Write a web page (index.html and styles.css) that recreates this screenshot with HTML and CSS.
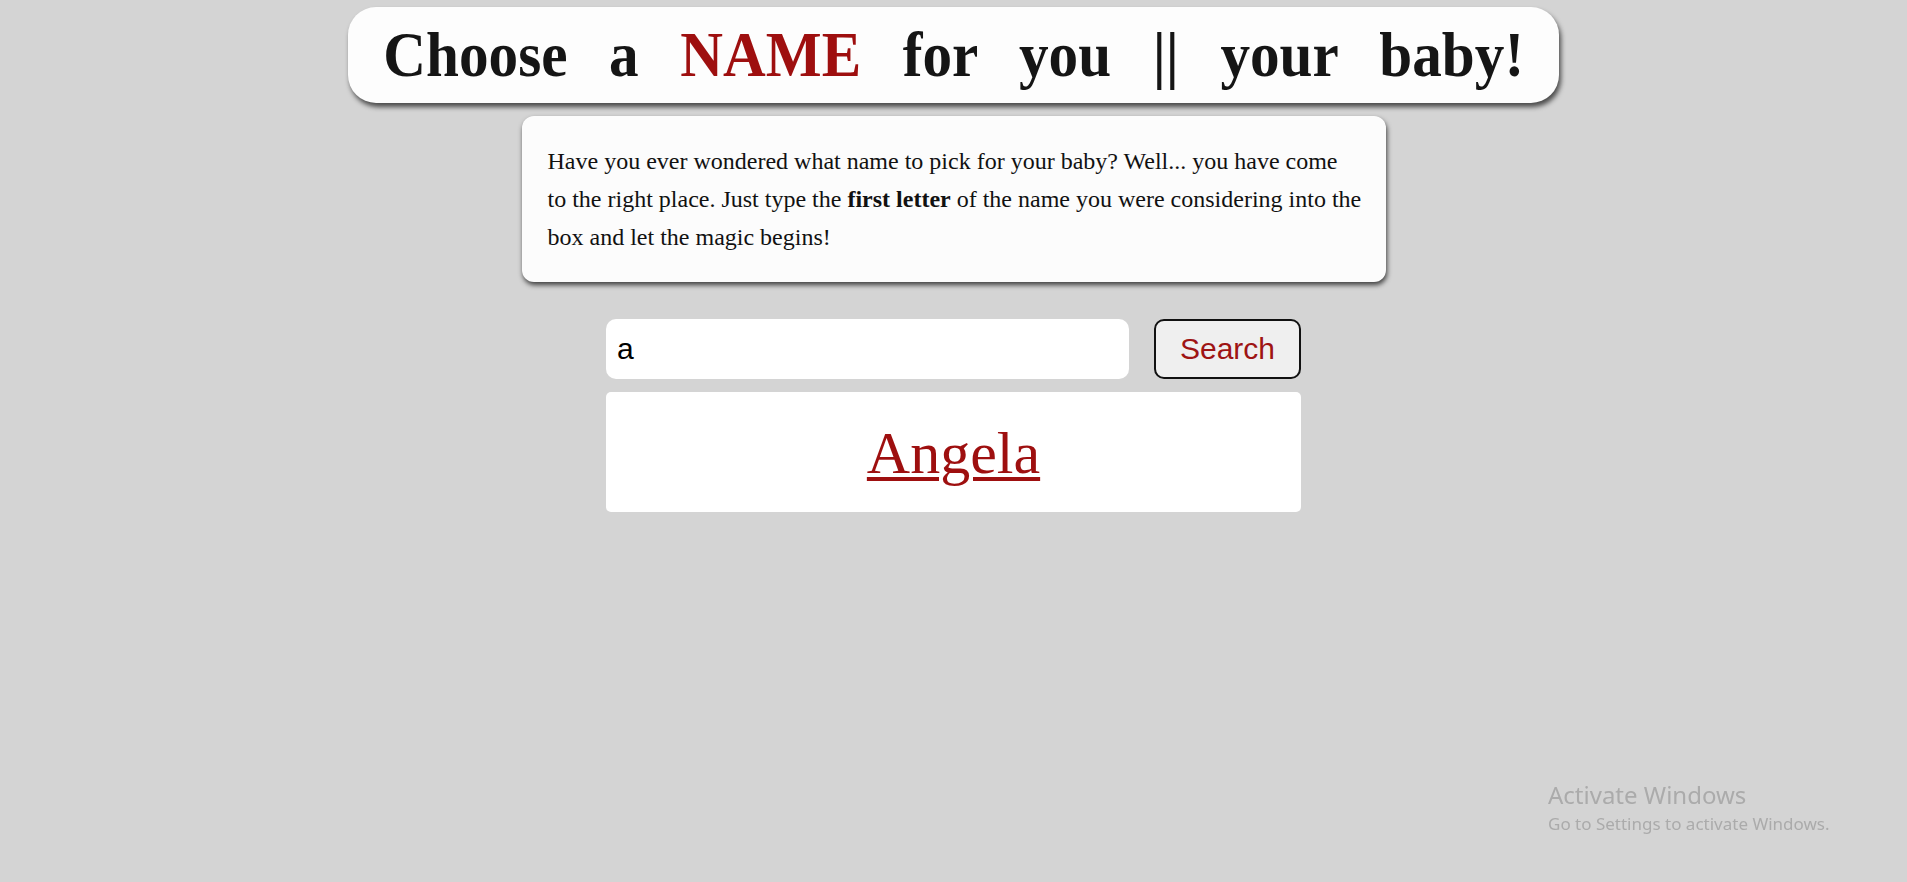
FILE: index.html
```html
<!DOCTYPE html>
<html lang="en">
<head>
<meta charset="utf-8">
<title>Choose a NAME</title>
<link rel="stylesheet" href="styles.css">
</head>
<body>
<main class="page">
  <h1 class="title"><span class="title-text">Choose a <span class="accent">NAME</span> for you || your baby!</span></h1>
  <div class="intro">
    <p>Have you ever wondered what name to pick for your baby? Well... you have come to the right place. Just type the <b>first letter</b> of the name you were considering into the box and let the magic begins!</p>
  </div>
  <form class="search-row">
    <input class="search-input" type="text" value="a">
    <button class="search-btn" type="button">Search</button>
  </form>
  <div class="result">
    <a class="result-name" href="#">Angela</a>
  </div>
</main>
<div class="watermark">
  <div class="wm-title">Activate Windows</div>
  <div class="wm-sub">Go to Settings to activate Windows.</div>
</div>
</body>
</html>
```
FILE: styles.css
```css
html, body {
  margin: 0;
  padding: 0;
  background: #d4d4d4;
}
body {
  font-family: "Liberation Serif", "Times New Roman", serif;
}
.page {
  display: flex;
  flex-direction: column;
  align-items: center;
  padding-top: 7px;
}
.title {
  box-sizing: border-box;
  width: 1211px;
  height: 96px;
  margin: 0;
  display: flex;
  justify-content: center;
  font-size: 64px;
  line-height: 96px;
  font-weight: bold;
  color: #151515;
  background: #fdfdfd;
  border-radius: 28px;
  box-shadow: 2px 4px 5px rgba(0, 0, 0, 0.65);
  white-space: nowrap;
}
.title-text {
  display: inline-block;
  word-spacing: 29px;
  transform: scaleX(0.925);
  transform-origin: center;
}
.accent {
  color: #9e0f0f;
}
.intro {
  box-sizing: border-box;
  width: 864px;
  margin-top: 13px;
  padding: 26px 24px 26px 26px;
  background: #fcfcfc;
  border-radius: 12px;
  box-shadow: 1px 3px 5px rgba(0, 0, 0, 0.7);
}
.intro p {
  margin: 0;
  font-size: 24px;
  line-height: 38px;
  color: #111;
}
.search-row {
  display: flex;
  gap: 25px;
  margin: 37px 0 0;
}
.search-input {
  box-sizing: border-box;
  width: 523px;
  height: 60px;
  border: none;
  border-radius: 10px;
  background: #fff;
  padding: 0 11px;
  font-family: "Liberation Sans", Arial, sans-serif;
  font-size: 30px;
  color: #000;
  outline: none;
}
.search-btn {
  box-sizing: border-box;
  width: 147px;
  height: 60px;
  border: 2px solid #111;
  border-radius: 10px;
  background: #efefef;
  font-family: "Liberation Sans", Arial, sans-serif;
  font-size: 30px;
  color: #9e1414;
  padding: 0;
}
.result {
  box-sizing: border-box;
  width: 695px;
  height: 120px;
  margin-top: 13px;
  background: #fff;
  border-radius: 5px;
  display: flex;
  justify-content: center;
  align-items: center;
}
.result-name {
  font-size: 60px;
  color: #9e0f0f;
  text-decoration: underline;
  text-decoration-thickness: 4px;
  text-underline-offset: 4px;
  padding-top: 2px;
}
.watermark {
  position: fixed;
  left: 1548px;
  top: 780px;
  color: #ababab;
  font-family: "Noto Sans", "Open Sans", sans-serif;
}
.wm-title {
  font-size: 24px;
  line-height: 30px;
}
.wm-sub {
  font-size: 17px;
  line-height: 22px;
  margin-top: 3px;
}
```
